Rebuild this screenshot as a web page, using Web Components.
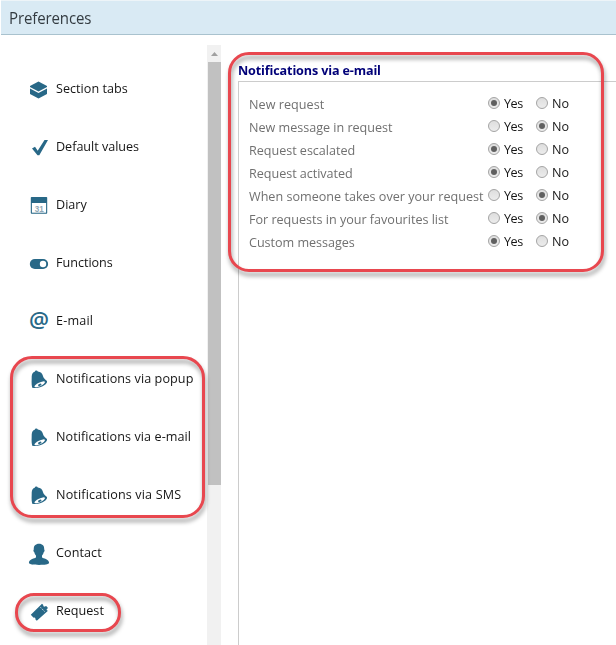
<!DOCTYPE html>
<html lang="en">
<head>
<meta charset="utf-8">
<title>Preferences</title>
<style>
html,body{margin:0;background:#fff;overflow:hidden}
body{font-family:"Open Sans","Noto Sans",sans-serif;font-size:13px;color:#151515}
</style>
</head>
<body>
<preferences-app></preferences-app>
<script>
const ink = '#286887';
const icons = {
  tabs: `<path d="M1 6L9.500 1.500 18 6v1l-8.500 4.500L1 7z"/><path d="M1 8.500l8.500 4.400L18 8.500V14l-8.500 4.500L1 14z"/>`,
  check: `<path d="M3 10.500l3-1.800 2.700 4L15.500 2H19L10.300 17.300H8.500z"/>`,
  diary: `<path d="M2.500 1h15a.7.7 0 0 1 .7.700V17a.7.7 0 0 1-.7.700h-15a.7.7 0 0 1-.7-.7V1.700A.7.7 0 0 1 2.500 1z"/><path fill="#fff" d="M2.900 7h14.200v9.700H2.900z"/><text x="10.200" y="15.500" text-anchor="middle" font-family="Liberation Sans" font-size="9" font-weight="bold" fill="#90a7b5" textLength="9" lengthAdjust="spacingAndGlyphs">31</text>`,
  toggle: `<rect x=".8" y="5" width="18.300" height="10" rx="5"/><circle cx="14" cy="10" r="3.200" fill="#fff"/>`,
  at: `<text x="10" y="16.200" text-anchor="middle" font-family="Open Sans" font-size="21" font-weight="600" textLength="20" lengthAdjust="spacingAndGlyphs">@</text>`,
  bell: `<path d="M3.200 17.700C2.200 14 2.800 9.500 2.700 6.500 2.800 3.800 4 2.200 5.700 1.800 6 .4 8.300.2 8.800 1.400c2.900.2 4.400 1.900 5 4.200.6 2.500 2 3.900 4.200 5.500C19 14.500 10.500 19.600 3.200 17.700z"/><ellipse fill="#fff" cx="10.700" cy="14.300" rx="5.800" ry="1.750" transform="rotate(-25 10.700 14.300)"/><ellipse cx="10.700" cy="14.800" rx="1.900" ry="1" transform="rotate(-25 10.700 14.800)"/>`,
  person: `<g transform="translate(.5 1)"><path d="M9.500-1.200C13-1.200 15 1 14.700 4.500c.8.4.3 2.300-.5 2.700-.5 1.700-1 2.600-1.700 3.200v2.200c1 .9 7 1.300 7.100 5.400-.6 1.300-4.300 1.900-10 1.900S0 19.300-.600 18c.1-4.100 6.100-4.500 7.100-5.400v-2.200c-.7-.6-1.200-1.500-1.700-3.200-.8-.4-1.300-2.300-.5-2.700C4 1 6-1.200 9.500-1.200z"/></g>`,
  ticket: `<path d="M1.800 12.700L13 1.800l1.300 1.300c-.4 1 .6 1.900 1.500 1.500L17.200 4 19 6l-1.300 1.300c-.3.900.4 1.500 1.300 1.400L7.800 18.800l-1.500-1.600c.5-1.200-.5-2.100-1.700-1.500z"/><path d="M11.500 5.300l4.500 4.700" fill="none" stroke="#fff" stroke-width=".8" stroke-dasharray="1.300 1"/>`
};
function define(name, markup, setup) {
  customElements.define(name, class extends HTMLElement {
    connectedCallback() {
      if (this.shadowRoot) return;
      const t = document.createElement('template');
      t.innerHTML = typeof markup === 'function' ? markup(this) : markup;
      this.attachShadow({mode:'open'}).append(t.content.cloneNode(true));
      if (setup) setup(this);
    }
  });
}

/* A one-line label with slightly condensed letters, tracked to fill the given width. */
const condense = 0.97;
define('fit-text', el => `<style>
:host{display:inline-block;white-space:pre;line-height:20px;width:${el.getAttribute('w')}px}
span{display:inline-block;transform:scaleX(${condense});transform-origin:0 50%}
</style><span><slot></slot></span>`, el => {
  const span = el.shadowRoot.querySelector('span');
  const gap = (parseFloat(el.getAttribute('w')) / condense - span.offsetWidth) / el.textContent.length;
  span.style.letterSpacing = gap.toFixed(3) + 'px';
});

define('page-header', `<style>
:host{display:flex;align-items:center;box-sizing:border-box;height:35px;margin-left:1px;padding:1px 0 0 8px;border-top:1px solid #edf4f8;border-bottom:1px solid #a9c2ce;background:#d9eaf4;color:#333b41;font-size:15.500px}
</style><slot></slot>`);

define('nav-item', el => `<style>
:host{display:flex;align-items:center;height:58px;padding-left:29px}
svg{width:19px;height:19px;margin:3px 8px 0 0;overflow:visible;fill:${ink};flex:none}
</style><svg viewBox="0 0 19 19">${icons[el.getAttribute('icon')]}</svg><slot></slot>`);

define('nav-list', `<style>:host{display:block;width:207px;padding-top:24px;flex:none}</style><slot></slot>`);

define('scroll-track', `<style>
:host{display:flex;flex-direction:column;width:14px;margin-top:10px;background:#f1f1f1;flex:none}
svg{width:14px;height:17px;flex:none}
div{height:423px;margin-left:1px;background:#c1c1c1}
</style><svg viewBox="0 0 14 17"><path d="M4 11l3.500-4 3.500 4z" fill="#a0a0a0"/></svg><div></div>`);

define('radio-option', `<style>
:host{display:flex;align-items:center;width:48px;margin-top:-1px}
i{box-sizing:border-box;width:12px;height:12px;margin-right:4px;border:1px solid #a4a4a4;border-radius:50%;background:linear-gradient(#dedede,#ececec);display:grid;place-items:center;flex:none}
:host([on]) i::after{content:"";width:6px;height:6px;border-radius:50%;background:#606060}
</style><i></i><slot></slot>`);

define('setting-row', el => {
  const yes = el.hasAttribute('yes');
  return `<style>
:host{display:flex;align-items:center;height:23px}
.name{width:239px;color:#707070;flex:none;padding-top:1px;box-sizing:border-box}
</style><div class="name"><slot></slot></div>
<radio-option ${yes?'on':''}><fit-text w="19">Yes</fit-text></radio-option><radio-option ${yes?'':'on'}><fit-text w="17.500">No</fit-text></radio-option>`;
});

define('settings-group', `<style>
:host{display:flex;flex-direction:column;flex:1;margin-left:17px;padding-top:25px}
header{height:21px;color:#000078;font-weight:700}
section{flex:1;border:solid #ccc;border-width:1px 0 0 1px;padding:10px 0 0 10px}
</style><header><slot name="title"></slot></header><section><slot></slot></section>`);

/* Hand-placed callout outline lying over the page. */
define('call-out', el => `<style>
:host{position:absolute;box-sizing:border-box;left:${el.getAttribute('x')}px;top:${el.getAttribute('y')}px;width:${el.getAttribute('w')}px;height:${el.getAttribute('h')}px;border:3px solid #e8474f;border-radius:${el.getAttribute('r')}px;filter:drop-shadow(1px 4px 2px rgba(0,0,0,.4));pointer-events:none}
</style>`);

const nav = [['tabs','Section tabs',72],['check','Default values',83],['diary','Diary',31],['toggle','Functions',57],['at','E-mail',37],['bell','Notifications via popup',137.5],['bell','Notifications via e-mail',135.5],['bell','Notifications via SMS',125],['person','Contact',46],['ticket','Request',47.5]];
const settings = [['New request',75,1],['New message in request',144,0],['Request escalated',106,1],['Request activated',104,1],['When someone takes over your request',234.5,0],['For requests in your favourites list',199,0],['Custom messages',106,1]];

define('preferences-app', `<style>
:host{display:flex;flex-direction:column;position:relative;width:616px;height:645px;overflow:hidden}
main{display:flex;height:610px}
nav-item,setting-row{font-size:13px}
</style>
<page-header><fit-text w="82">Preferences</fit-text></page-header>
<main>
<nav-list>${nav.map(([i,t,w])=>`<nav-item icon="${i}"><fit-text w="${w}">${t}</fit-text></nav-item>`).join('')}</nav-list>
<scroll-track></scroll-track>
<settings-group><fit-text slot="title" w="143">Notifications via e-mail</fit-text>
${settings.map(([t,w,y])=>`<setting-row ${y?'yes':''}><fit-text w="${w}">${t}</fit-text></setting-row>`).join('')}
</settings-group>
</main>
<call-out x="10" y="356" w="195" h="162" r="22"></call-out>
<call-out x="228" y="52" w="376" h="220" r="21"></call-out>
<call-out x="15" y="593" w="106" h="39" r="19"></call-out>`);
</script>
</body>
</html>
